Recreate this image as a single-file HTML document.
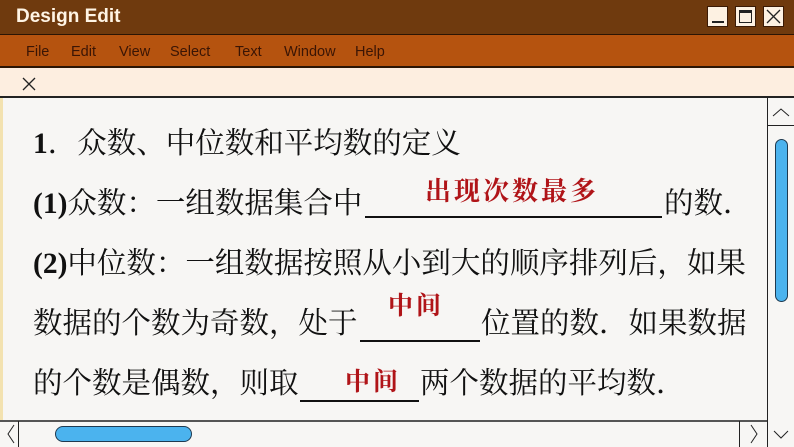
<!DOCTYPE html>
<html><head><meta charset="utf-8"><style>
*{margin:0;padding:0;box-sizing:border-box}
body{width:794px;height:447px;overflow:hidden;background:#f7f6f4;position:relative;font-family:"Liberation Serif","Noto Serif CJK SC",serif}
.a{position:absolute}
#title{left:0;top:0;width:794px;height:35px;background:#6f3a0e;border-bottom:1px solid #2a1505}
#title span{position:absolute;left:16px;top:6px;color:#fff4e4;font:bold 19px "Liberation Sans",sans-serif}
.btn{position:absolute;top:6px;width:21px;height:21px;background:#fdf1e2;border:1px solid #3a1a05}
#menu{left:0;top:35px;width:794px;height:33px;background:#b5530f;border-bottom:2px solid #2a1505;font:14.5px "Liberation Sans",sans-serif;color:#3a1505}
#menu span{position:absolute;top:9px}
#tab{left:0;top:68px;width:794px;height:30px;background:#fdeee0;border-bottom:2px solid #222}
.t{position:absolute;font-size:29.5px;color:#111;white-space:nowrap;line-height:1}
.r{position:absolute;font-family:"Noto Serif CJK SC",serif;font-weight:bold;color:#b01418;white-space:nowrap;line-height:1}
.u{position:absolute;height:2px;background:#111}
</style></head><body>
<div class="a" id="title"><span>Design Edit</span>
<div class="btn" style="left:707px"><div class="a" style="left:4px;top:14px;width:12px;height:2px;background:#222"></div></div>
<div class="btn" style="left:735px"><div class="a" style="left:3px;top:3px;width:13px;height:13px;border:1px solid #222;border-top:3px solid #222"></div></div>
<div class="btn" style="left:763px"><svg width="19" height="19" class="a" style="left:0;top:0"><path d="M3 3L16 16M16 3L3 16" stroke="#222" stroke-width="1.3"/></svg></div>
</div>
<div class="a" id="menu"><span style="left:26px">File</span><span style="left:71px">Edit</span><span style="left:119px">View</span><span style="left:170px">Select</span><span style="left:235px">Text</span><span style="left:284px">Window</span><span style="left:355px">Help</span></div>
<div class="a" id="tab"><svg width="14" height="14" class="a" style="left:22px;top:9px"><path d="M1 1L13 13M13 1L1 13" stroke="#222" stroke-width="1.3"/></svg></div>
<div class="a" style="left:0;top:98px;width:3px;height:322px;background:#f3e2b0"></div>
<div class="t" style="left:33px;top:130px"><b>1</b>．众数、中位数和平均数的定义</div>
<div class="t" style="left:33px;top:190px"><b>(1)</b>众数：一组数据集合中</div>
<div class="u" style="left:365px;top:216px;width:297px"></div>
<div class="r" style="left:425px;top:177px;font-size:26px;letter-spacing:3px">出现次数最多</div>
<div class="t" style="left:664px;top:190px">的数．</div>
<div class="t" style="left:33px;top:250px"><b>(2)</b>中位数：一组数据按照从小到大的顺序排列后，如果</div>
<div class="t" style="left:33px;top:310px">数据的个数为奇数，处于</div>
<div class="u" style="left:360px;top:340px;width:120px"></div>
<div class="r" style="left:388px;top:292px;font-size:25px;letter-spacing:3px">中间</div>
<div class="t" style="left:481px;top:310px">位置的数．如果数据</div>
<div class="t" style="left:33px;top:370px">的个数是偶数，则取</div>
<div class="u" style="left:300px;top:400px;width:119px"></div>
<div class="r" style="left:345px;top:368px;font-size:25px;letter-spacing:3px">中间</div>
<div class="t" style="left:420px;top:370px">两个数据的平均数．</div>
<div class="a" style="left:767px;top:98px;width:27px;height:349px;background:#f7f6f4;border-left:1px solid #222"></div>
<div class="a" style="left:767px;top:125px;width:27px;height:1px;background:#222"></div>
<svg class="a" width="20" height="12" style="left:771px;top:106px"><path d="M2 10L10 3L18 10" stroke="#222" fill="none" stroke-width="1"/></svg>
<div class="a" style="left:775px;top:139px;width:13px;height:163px;background:#4bb3ee;border:1px solid #1e3a50;border-radius:7px"></div>
<div class="a" style="left:0;top:420px;width:767px;height:27px;background:#f7f6f4;border-top:2px solid #555"></div>
<div class="a" style="left:18px;top:421px;width:1px;height:26px;background:#222"></div>
<div class="a" style="left:739px;top:421px;width:1px;height:26px;background:#222"></div>
<svg class="a" width="12" height="22" style="left:5px;top:423px"><path d="M9 2L3 11L9 20" stroke="#222" fill="none"/></svg>
<svg class="a" width="12" height="22" style="left:748px;top:423px"><path d="M3 2L9 11L3 20" stroke="#222" fill="none"/></svg>
<svg class="a" width="20" height="12" style="left:771px;top:428px"><path d="M3 3L10 10L17 3" stroke="#222" fill="none"/></svg>
<div class="a" style="left:55px;top:426px;width:137px;height:16px;background:#4bb3ee;border:1px solid #1e3a50;border-radius:8px"></div>
</body></html>
